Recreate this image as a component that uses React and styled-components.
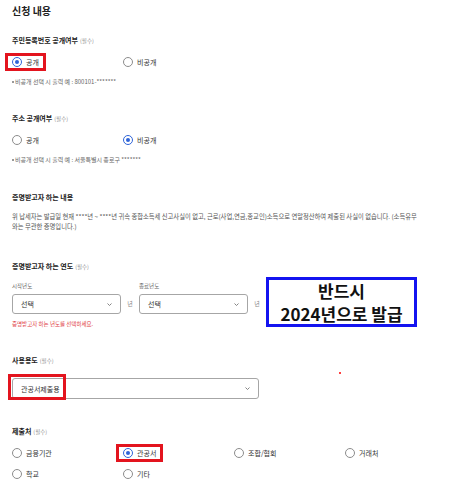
import React from "react";
import styled, { createGlobalStyle, css } from "styled-components";

const GlobalStyle = createGlobalStyle`
  body {
    margin: 0;
    background: #fff;
    font-family: "Noto Sans CJK KR", "Noto Sans", sans-serif;
    color: #222;
  }
`;

const Chevron = () => (
    <svg width="5" height="3" viewBox="0 0 5 3">
        <path d="M0.5 0.5 L2.5 2.5 L4.5 0.5" fill="none" stroke="#777" strokeWidth="0.9" />
    </svg>
);

const Radio = ({ label, on, marked }) => (
    <Option $marked={marked}>
        <Circle $on={on} />
        {label}
    </Option>
);

const App = () => {
    return (
        <Page>
            <GlobalStyle />
            <Title>신청 내용</Title>

            <Section $top={17}>
                <Label>
                    주민등록번호 공개여부<span>(필수)</span>
                </Label>
                <RadioGrid $cols={2}>
                    <Radio label="공개" on marked />
                    <Radio label="비공개" />
                </RadioGrid>
                <Note>
                    <Bullet />
                    비공개 선택 시 출력 예 : 800101-*******
                </Note>
            </Section>

            <Section $top={27}>
                <Label>
                    주소 공개여부<span>(필수)</span>
                </Label>
                <RadioGrid $cols={2}>
                    <Radio label="공개" />
                    <Radio label="비공개" on />
                </RadioGrid>
                <Note>
                    <Bullet />
                    비공개 선택 시 출력 예 : 서울특별시 종로구 *******
                </Note>
            </Section>

            <Section $top={28}>
                <Label>증명받고자 하는 내용</Label>
                <Body>
                    위 납세자는 발급일 현재 ****년 ~ ****년 귀속 종합소득세 신고사실이 없고, 근로(사업,연금,종교인)소득으로 연말정산하여 제출된 사실이 없습니다. (소득유무
                    <br />
                    와는 무관한 증명입니다.)
                </Body>
            </Section>

            <Section $top={29}>
                <Label>
                    증명받고자 하는 연도<span>(필수)</span>
                </Label>
                <YearRow>
                    <Field>
                        <SubLabel>시작년도</SubLabel>
                        <Select $w={109} $h={20}>
                            선택
                            <Chevron />
                        </Select>
                        <ErrorText>증명받고자 하는 년도를 선택하세요.</ErrorText>
                    </Field>
                    <Unit>년</Unit>
                    <Field>
                        <SubLabel>종료년도</SubLabel>
                        <Select $w={109} $h={20}>
                            선택
                            <Chevron />
                        </Select>
                    </Field>
                    <Unit>년</Unit>
                    <Notice>
                        <span>반드시</span>
                        <span>2024년으로 발급</span>
                    </Notice>
                </YearRow>
            </Section>

            <Section $top={27}>
                <Label>
                    사용용도<span>(필수)</span>
                </Label>
                <Select $w={247} $h={21} style={{ marginTop: 12 }}>
                    <Highlight>관공서제출용</Highlight>
                    <Chevron />
                </Select>
            </Section>

            <Section $top={27}>
                <Label>
                    제출처<span>(필수)</span>
                </Label>
                <RadioGrid $cols={4}>
                    <Radio label="금융기관" />
                    <Radio label="관공서" on marked />
                    <Radio label="조합/협회" />
                    <Radio label="거래처" />
                    <Radio label="학교" />
                    <Radio label="기타" />
                </RadioGrid>
            </Section>

            <Dot />
        </Page>
    );
};

export default App;

const Page = styled.div`
    position: relative;
    width: 464px;
    height: 482px;
    padding: 4px 0 0 12px;
    box-sizing: border-box;
    overflow: hidden;
`;

const Title = styled.h1`
    margin: 0;
    font-size: 10px;
    line-height: 14px;
    font-weight: 700;
    color: #222;
`;

const Section = styled.section`
    margin-top: ${(p) => p.$top}px;
`;

const Label = styled.div`
    font-size: 7px;
    line-height: 10px;
    font-weight: 700;
    color: #222;

    span {
        font-size: 5.5px;
        font-weight: 400;
        color: #8a8a8a;
        margin-left: 2px;
    }
`;

const RadioGrid = styled.div`
    display: grid;
    grid-template-columns: repeat(${(p) => p.$cols}, 111px);
    row-gap: 9px;
    margin-top: 10px;
`;

const Option = styled.label`
    position: relative;
    justify-self: start;
    display: inline-flex;
    align-items: center;
    gap: 4px;
    height: 12px;
    font-size: 7px;
    color: #333;

    ${(p) =>
        p.$marked &&
        css`
            &::after {
                content: "";
                position: absolute;
                top: -3px;
                bottom: -3px;
                left: -7px;
                right: -7px;
                border: 3px solid #e3141e;
            }
        `}
`;

const Circle = styled.span`
    width: 10px;
    height: 10px;
    box-sizing: border-box;
    border-radius: 50%;
    border: 1px solid ${(p) => (p.$on ? "#2f64d8" : "#8c8c8c")};
    display: flex;
    align-items: center;
    justify-content: center;

    &::before {
        content: "";
        width: 4px;
        height: 4px;
        border-radius: 50%;
        background: #2f64d8;
        display: ${(p) => (p.$on ? "block" : "none")};
    }
`;

const Note = styled.p`
    display: flex;
    align-items: center;
    margin: 10px 0 0;
    font-size: 6px;
    line-height: 8px;
    color: #666;
`;

const Bullet = styled.span`
    width: 2px;
    height: 2px;
    border-radius: 50%;
    background: #777;
    margin-right: 1px;
`;

const Body = styled.p`
    margin: 10px 0 0;
    font-size: 6.3px;
    line-height: 10px;
    color: #555;
    white-space: nowrap;
`;

const YearRow = styled.div`
    display: flex;
    align-items: flex-start;
    margin-top: 10px;
`;

const Field = styled.div`
    display: flex;
    flex-direction: column;
    width: 109px;
`;

const SubLabel = styled.div`
    font-size: 5.5px;
    line-height: 8px;
    color: #666;
    margin-bottom: 4px;
`;

const Select = styled.div`
    display: flex;
    align-items: center;
    justify-content: space-between;
    box-sizing: border-box;
    width: ${(p) => p.$w}px;
    height: ${(p) => p.$h}px;
    padding: 0 8px;
    border: 1px solid #a6a6a6;
    border-radius: 3px;
    font-size: 7px;
    color: #333;
    background: #fff;
`;

const Unit = styled.span`
    width: 18px;
    margin-top: 12px;
    height: 20px;
    line-height: 20px;
    text-align: center;
    font-size: 6px;
    color: #888;
`;

const ErrorText = styled.div`
    margin-top: 6px;
    font-size: 5.5px;
    line-height: 8px;
    color: #e0393e;
    white-space: nowrap;
`;

const Notice = styled.div`
    margin-top: -5px;
    width: 151px;
    height: 50px;
    box-sizing: border-box;
    border: 3px solid #1414f0;
    display: flex;
    flex-direction: column;
    align-items: center;
    justify-content: center;
    font-size: 17px;
    line-height: 23px;
    font-weight: 700;
    color: #111;
`;

const Highlight = styled.span`
    position: relative;
    display: inline-block;
    line-height: 10px;

    &::after {
        content: "";
        position: absolute;
        top: -10px;
        bottom: -6px;
        left: -13px;
        right: -6px;
        border: 3px solid #e3141e;
    }
`;

const Dot = styled.span`
    position: absolute;
    left: 339px;
    top: 372px;
    width: 2px;
    height: 2px;
    border-radius: 50%;
    background: #f00;
`;
